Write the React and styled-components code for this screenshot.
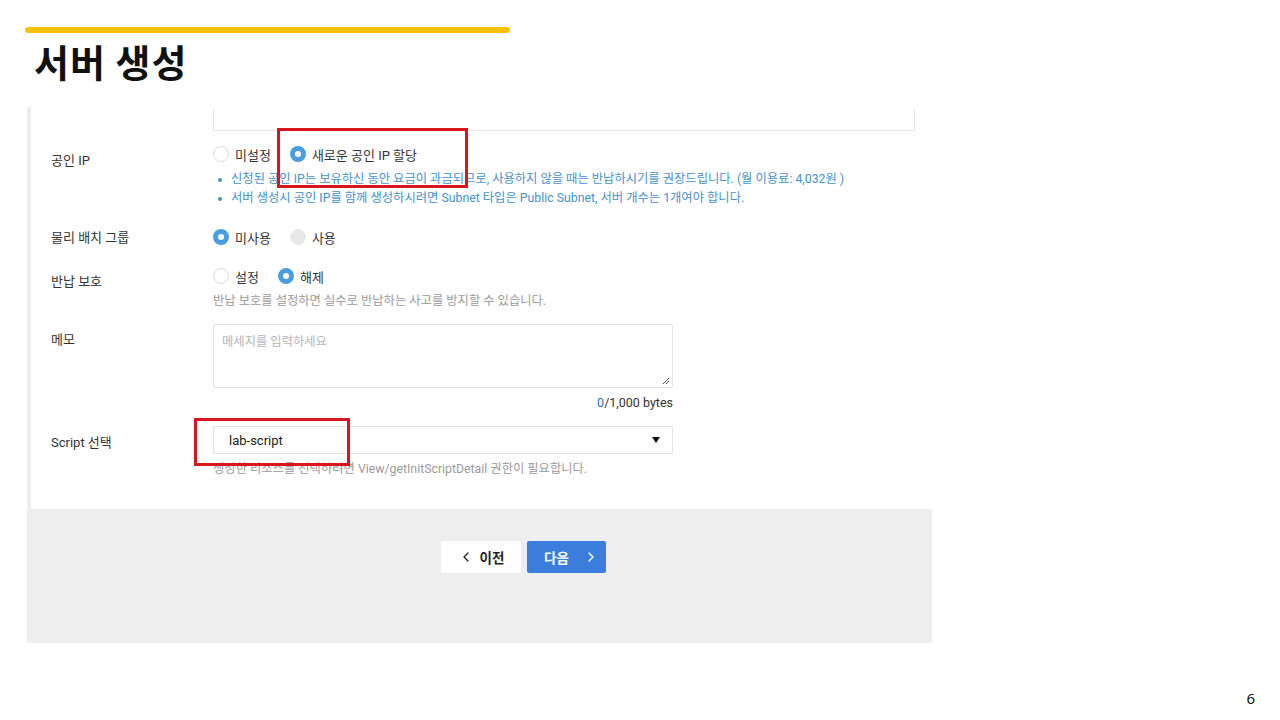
import styled, { createGlobalStyle } from "styled-components";
import { ChevronLeft, ChevronRight } from "lucide-react";

const GlobalStyle = createGlobalStyle`
  * { box-sizing: border-box; }
  body {
    margin: 0;
    background: #fff;
    font-family: Roboto, "Noto Sans CJK KR", sans-serif;
  }
`;

const Slide = styled.div`
  position: relative;
  width: 1280px;
  height: 720px;
  overflow: hidden;
  background: #fff;
`;

const Header = styled.div`
  padding: 27px 0 0 25px;
  height: 107px;
`;

const Bar = styled.div`
  width: 485px;
  height: 6px;
  border-radius: 3px;
  background: #f9c10a;
`;

const Title = styled.h1`
  margin: 3px 0 0 9px;
  font-family: "Noto Sans CJK KR", sans-serif;
  font-size: 38px;
  line-height: 50px;
  font-weight: 700;
  color: #111;
  letter-spacing: 1px;
`;

const Panel = styled.div`
  margin-left: 27px;
  width: 905px;
  height: 536px;
  background: #eeeeee;
  padding-left: 4px;
  display: flex;
  flex-direction: column;
`;

const Form = styled.div`
  height: 402px;
  background: #fff;
  overflow: hidden;
  padding-top: 2px;
`;

const CutBox = styled.div`
  margin-left: 182px;
  width: 702px;
  height: 22px;
  border: 1px solid #e6e6e6;
  border-top: none;
`;

const Row = styled.div`
  display: grid;
  grid-template-columns: 182px 460px;
  align-items: start;
  padding-top: ${(p) => p.$top || 0}px;
`;

const Label = styled.div`
  padding: ${(p) => p.$top || 0}px 0 0 20px;
  font-size: 13px;
  line-height: 18px;
  color: #333;
`;

const Controls = styled.div`
  display: flex;
  flex-direction: column;
`;

const RadioGroup = styled.div`
  display: flex;
  align-items: center;
  height: 18px;
  gap: ${(p) => p.$gap || 16}px;
`;

const RadioItem = styled.label`
  display: flex;
  align-items: center;
  gap: 6px;
  font-size: 13px;
  color: #333;
`;

const Dot = styled.span`
  width: 16px;
  height: 16px;
  border-radius: 50%;
  flex: none;
  background: ${(p) => (p.$disabled ? "#e8e8e8" : "#fff")};
  border: ${(p) =>
    p.$checked ? "5px solid #4a9ee0" : `1px solid ${p.$disabled ? "#e8e8e8" : "#dcdcdc"}`};
`;

const Notes = styled.ul`
  margin: 7px 0 0;
  padding: 0 0 0 4px;
  list-style: none;
  width: 700px;
`;

const Note = styled.li`
  position: relative;
  padding-left: 14px;
  font-size: 12.3px;
  line-height: 19px;
  color: #4791cc;
  white-space: nowrap;

  &::before {
    content: "";
    position: absolute;
    left: 1px;
    top: 8px;
    width: 4px;
    height: 4px;
    border-radius: 50%;
    background: #4791cc;
  }
`;

const Help = styled.div`
  margin-top: ${(p) => p.$top || 7}px;
  font-size: 12.3px;
  line-height: 18px;
  color: #9a9a9a;
  white-space: nowrap;
`;

const Memo = styled.div`
  position: relative;
  width: 460px;
  height: 64px;
  border: 1px solid #e3e3e3;
  border-radius: 2px;
  padding: 7px 8px;
  font-size: 12.3px;
  color: #b5b5b5;
`;

const Grip = styled.svg`
  position: absolute;
  right: 2px;
  bottom: 2px;
`;

const Counter = styled.div`
  margin-top: 6px;
  text-align: right;
  font-size: 12.5px;
  line-height: 18px;
  color: #333;

  span { color: #2f6fb3; }
`;

const Select = styled.div`
  width: 460px;
  height: 28px;
  border: 1px solid #e3e3e3;
  border-radius: 2px;
  display: flex;
  align-items: center;
  justify-content: space-between;
  padding: 0 12px 0 15px;
  font-size: 13px;
  color: #222;
`;

const Caret = styled.span`
  width: 0;
  height: 0;
  border-left: 4px solid transparent;
  border-right: 4px solid transparent;
  border-top: 6px solid #111;
`;

const Footer = styled.div`
  flex: 1;
  display: flex;
  gap: 6px;
  padding: 32px 0 0 410px;
`;

const Button = styled.button`
  width: ${(p) => p.$w}px;
  height: 32px;
  border: none;
  border-radius: 2px;
  display: flex;
  align-items: center;
  justify-content: ${(p) => (p.$primary ? "flex-start" : "center")};
  gap: ${(p) => p.$gap}px;
  padding: 0 0 0 ${(p) => (p.$primary ? 17 : 0)}px;
  font-family: "Noto Sans CJK KR", sans-serif;
  font-size: 13.5px;
  font-weight: 700;
  background: ${(p) => (p.$primary ? "#3b7ddb" : "#fff")};
  color: ${(p) => (p.$primary ? "#fff" : "#222")};
  cursor: pointer;
`;

const Highlight = styled.div`
  position: absolute;
  border: 3px solid #d8161b;
  left: ${(p) => p.$x}px;
  top: ${(p) => p.$y}px;
  width: ${(p) => p.$w}px;
  height: ${(p) => p.$h}px;
`;

const PageNo = styled.div`
  position: absolute;
  right: 25px;
  bottom: 12px;
  font-family: "Noto Sans", sans-serif;
  font-size: 15px;
  color: #111;
`;

const Radio = ({ checked, disabled, children }) => (
  <RadioItem>
    <Dot $checked={checked} $disabled={disabled} />
    {children}
  </RadioItem>
);

export default function App() {
  return (
    <>
      <GlobalStyle />
      <Slide>
        <Header>
          <Bar />
          <Title>서버 생성</Title>
        </Header>

        <Panel>
          <Form>
            <CutBox />

            <Row $top={14}>
              <Label $top={7}>공인 IP</Label>
              <Controls>
                <RadioGroup $gap={19}>
                  <Radio>미설정</Radio>
                  <Radio checked>새로운 공인 IP 할당</Radio>
                </RadioGroup>
                <Notes>
                  <Note>
                    신청된 공인 IP는 보유하신 동안 요금이 과금되므로, 사용하지 않을 때는 반납하시기를 권장드립니다. (월 이용료: 4,032원 )
                  </Note>
                  <Note>
                    서버 생성시 공인 IP를 함께 생성하시려면 Subnet 타입은 Public Subnet, 서버 개수는 1개여야 합니다.
                  </Note>
                </Notes>
              </Controls>
            </Row>

            <Row $top={20}>
              <Label $top={1}>물리 배치 그룹</Label>
              <RadioGroup $gap={19}>
                <Radio checked>미사용</Radio>
                <Radio disabled>사용</Radio>
              </RadioGroup>
            </Row>

            <Row $top={20}>
              <Label $top={6}>반납 보호</Label>
              <Controls>
                <RadioGroup $gap={19}>
                  <Radio>설정</Radio>
                  <Radio checked>해제</Radio>
                </RadioGroup>
                <Help $top={7}>반납 보호를 설정하면 실수로 반납하는 사고를 방지할 수 있습니다.</Help>
              </Controls>
            </Row>

            <Row $top={14}>
              <Label $top={7}>메모</Label>
              <Controls>
                <Memo>
                  메세지를 입력하세요
                  <Grip width="8" height="8" viewBox="0 0 8 8">
                    <path d="M7 1 L1 7 M7 4 L4 7" stroke="#555" strokeWidth="1" />
                  </Grip>
                </Memo>
                <Counter>
                  <span>0</span>/1,000 bytes
                </Counter>
              </Controls>
            </Row>

            <Row $top={14}>
              <Label $top={8}>Script 선택</Label>
              <Controls>
                <Select>
                  lab-script
                  <Caret />
                </Select>
                <Help $top={6}>생성한 리소스를 선택하려면 View/getInitScriptDetail 권한이 필요합니다.</Help>
              </Controls>
            </Row>
          </Form>

          <Footer>
            <Button $w={80} $gap={6}>
              <ChevronLeft size={16} strokeWidth={2} />
              이전
            </Button>
            <Button $w={79} $gap={14} $primary>
              다음
              <ChevronRight size={16} strokeWidth={2} />
            </Button>
          </Footer>
        </Panel>

        <Highlight $x={277} $y={128} $w={191} $h={60} />
        <Highlight $x={194} $y={418} $w={156} $h={48} />

        <PageNo>6</PageNo>
      </Slide>
    </>
  );
}
